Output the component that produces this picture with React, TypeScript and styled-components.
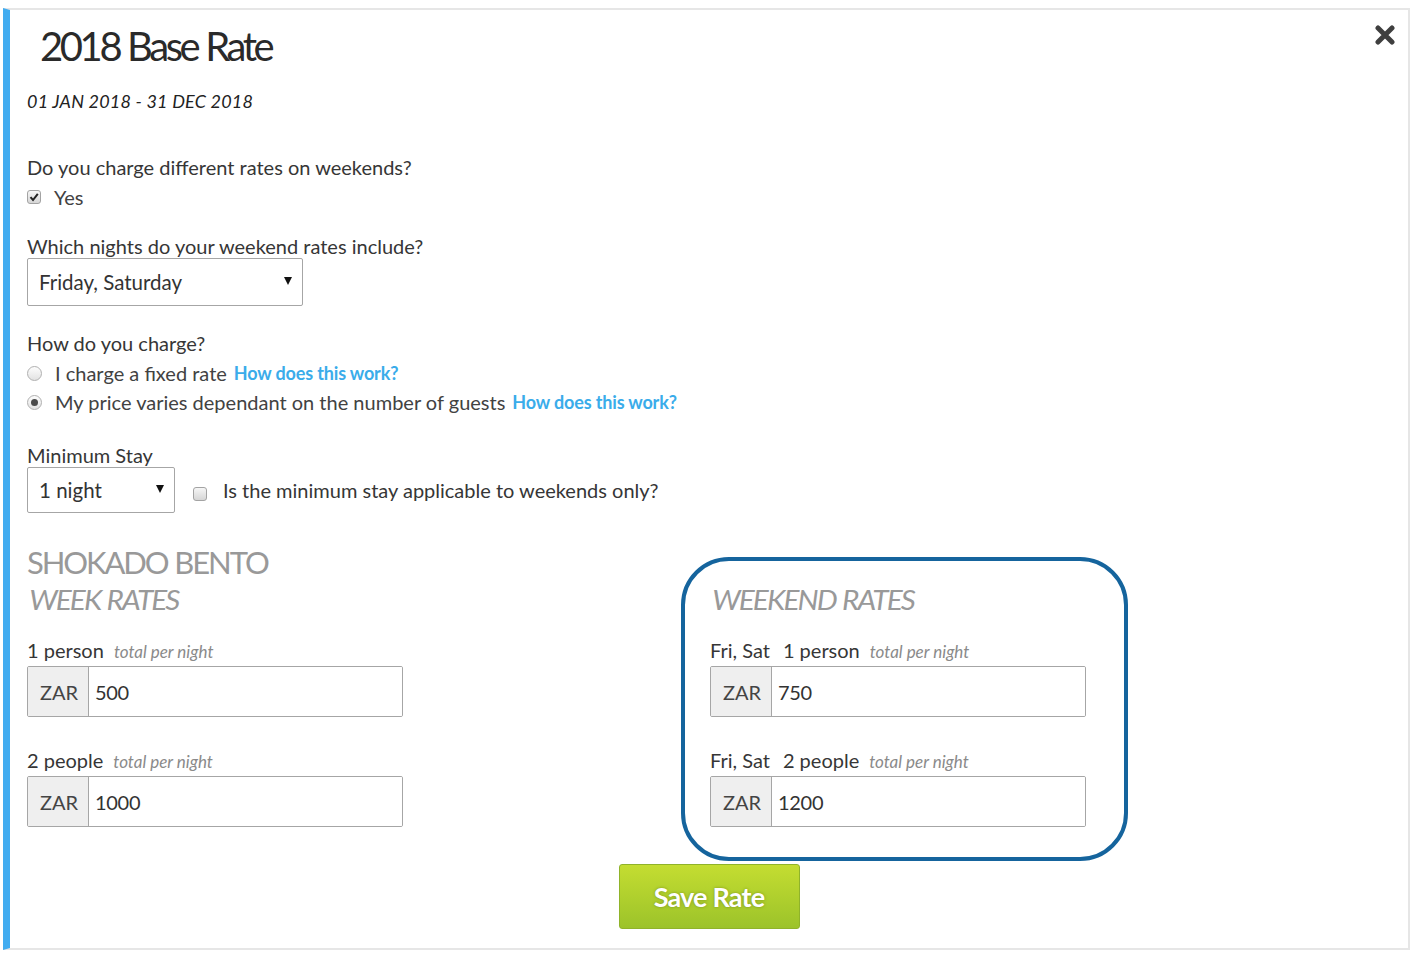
import React from 'react'
import styled, { createGlobalStyle } from 'styled-components'

const GlobalStyle = createGlobalStyle`
  html, body {
    margin: 0;
    padding: 0;
    background: #ffffff;
  }

  body {
    font-family: Lato, "Open Sans", "Liberation Sans", sans-serif;
    color: #3b3b3b;
  }

  * {
    box-sizing: border-box;
  }
`

const StyledPanel = styled.div`
  position: relative;
  margin: 8px 0 0 3px;
  width: 1407px;
  height: 942px;
  border: 2px solid #e6e6e6;
  border-left: 7px solid #42acf0;
  padding: 12px 0 0 17px;
`

const StyledClose = styled.button`
  position: absolute;
  top: 15px;
  right: 13px;
  width: 20px;
  height: 20px;
  padding: 0;
  border: none;
  background: none;
  cursor: pointer;
`

const StyledTitle = styled.h1`
  margin: 0 0 0 13px;
  font-size: 40px;
  line-height: 48px;
  font-weight: 400;
  letter-spacing: -3.4px;
  word-spacing: 1px;
  color: #2a2a2a;
`

const StyledDates = styled.div`
  margin-top: 20px;
  font-size: 18px;
  line-height: 22px;
  font-style: italic;
  letter-spacing: 0.2px;
  color: #222;
`

const StyledLabel = styled.div<{ $mt: number }>`
  margin-top: ${p => p.$mt}px;
  font-size: 20px;
  line-height: 24px;
  color: #363636;
`

const StyledOptionRow = styled.div<{ $mt: number }>`
  display: flex;
  align-items: center;
  height: 26px;
  margin-top: ${p => p.$mt}px;
  font-size: 20px;
  color: #424242;
`

const StyledCheckbox = styled.span<{ $offset?: number; $ml?: number }>`
  display: inline-flex;
  align-items: center;
  justify-content: center;
  flex: none;
  width: 14px;
  height: 14px;
  margin-top: ${p => p.$offset ?? 0}px;
  margin-left: ${p => p.$ml ?? 0}px;
  border: 1px solid #a3a3a3;
  border-radius: 3px;
  background: linear-gradient(#f6f6f6, #d6d6d6);
`

const StyledRadio = styled.span<{ $checked?: boolean }>`
  display: inline-flex;
  align-items: center;
  justify-content: center;
  flex: none;
  width: 15px;
  height: 15px;
  border: 1px solid #b0b0b0;
  border-radius: 50%;
  background: linear-gradient(#fdfdfd, #e2e2e2);

  &::after {
    content: '';
    display: ${p => (p.$checked ? 'block' : 'none')};
    width: 7px;
    height: 7px;
    border-radius: 50%;
    background: #4a4a4a;
  }
`

const StyledOptionText = styled.span<{ $gap: number }>`
  margin-left: ${p => p.$gap}px;
`

const StyledLink = styled.a`
  margin-left: 7px;
  font-size: 18px;
  font-weight: 700;
  letter-spacing: -0.15px;
  color: #3aacea;
  text-decoration: none;
`

const StyledSelect = styled.div<{ $width: number; $height: number }>`
  position: relative;
  display: flex;
  align-items: center;
  width: ${p => p.$width}px;
  height: ${p => p.$height}px;
  padding-left: 11px;
  border: 1px solid #a6a6a6;
  border-radius: 2px;
  background: #fff;
  font-size: 20.5px;
  color: #333;

  &::after {
    content: '';
    position: absolute;
    right: 10px;
    top: 50%;
    margin-top: -5px;
    border-left: 4px solid transparent;
    border-right: 4px solid transparent;
    border-top: 8px solid #111;
  }
`

const StyledStayRow = styled.div`
  display: flex;
  align-items: center;
`

const StyledStayQuestion = styled.span`
  margin-left: 16px;
  font-size: 20px;
  color: #363636;
`

const StyledRates = styled.div`
  display: grid;
  grid-template-columns: 654px 447px;
  align-items: start;
  margin-top: 31px;
`

const StyledColumn = styled.div``

const StyledBrand = styled.div`
  font-size: 31px;
  line-height: 37px;
  letter-spacing: -2.1px;
  word-spacing: 1px;
  color: #999;
`

const StyledRatesHeading = styled.div<{ $mt: number }>`
  margin-top: ${p => p.$mt}px;
  padding-left: 2px;
  font-size: 27px;
  line-height: 32px;
  font-style: italic;
  letter-spacing: -1.7px;
  word-spacing: 1px;
  color: #999;
  transform: scaleX(1.1);
  transform-origin: left center;
`

const StyledWeekendBox = styled.div`
  margin-top: 13px;
  padding: 23px 36px 30px 25px;
  border: 4px solid #15649d;
  border-radius: 48px;
`

const StyledFieldLabel = styled.div<{ $mt: number }>`
  display: flex;
  align-items: baseline;
  margin-top: ${p => p.$mt}px;
  font-size: 20px;
  line-height: 24px;
  color: #363636;
`

const StyledDays = styled.span`
  margin-right: 13px;
`

const StyledHint = styled.span`
  margin-left: 10px;
  font-size: 17px;
  font-style: italic;
  color: #8a8a8a;
`

const StyledInputGroup = styled.div<{ $mt: number }>`
  display: flex;
  width: 376px;
  height: 51px;
  margin-top: ${p => p.$mt}px;
  border: 1px solid #a6a6a6;
  border-radius: 2px;
  overflow: hidden;
`

const StyledAddon = styled.span`
  display: flex;
  align-items: center;
  justify-content: center;
  flex: none;
  width: 61px;
  padding-left: 2px;
  border-right: 1px solid #a6a6a6;
  background: #efefef;
  font-size: 20px;
  color: #444;
`

const StyledInput = styled.input`
  flex: 1;
  min-width: 0;
  padding: 0 0 0 6px;
  border: none;
  outline: none;
  background: #fff;
  font-family: Lato, "Open Sans", "Liberation Sans", sans-serif;
  font-size: 20px;
  letter-spacing: -0.3px;
  color: #333;
`

const StyledFooter = styled.div`
  display: flex;
  justify-content: center;
  margin: 3px 0 0 -17px;
`

const StyledSaveButton = styled.button`
  width: 181px;
  height: 65px;
  border: 1px solid #90b32a;
  border-radius: 3px;
  background: linear-gradient(#c4dd31, #9cc32a);
  font-family: Lato, "Open Sans", "Liberation Sans", sans-serif;
  font-size: 27px;
  font-weight: 700;
  letter-spacing: -0.8px;
  color: #fff;
  text-shadow: 0 0 3px rgba(90, 110, 20, 0.6);
  cursor: pointer;
`

const CheckMark = () => (
  <svg width="10" height="10" viewBox="0 0 10 10">
    <path d="M1.5 5.2 L4 8 L8.8 1.8" fill="none" stroke="#222" strokeWidth="2" />
  </svg>
)

const CloseIcon = () => (
  <svg width="20" height="20" viewBox="0 0 20 20">
    <path d="M3 3 L17 17 M17 3 L3 17" stroke="#3f3f3f" strokeWidth="5" strokeLinecap="round" />
  </svg>
)

const RateField = ({ days, people, value, mt }: { days?: string; people: string; value: string; mt: number }) => (
  <>
    <StyledFieldLabel $mt={mt}>
      {days && <StyledDays>{days}</StyledDays>}
      <span>{people}</span>
      <StyledHint>total per night</StyledHint>
    </StyledFieldLabel>
    <StyledInputGroup $mt={2}>
      <StyledAddon>ZAR</StyledAddon>
      <StyledInput defaultValue={value} />
    </StyledInputGroup>
  </>
)

const App = () => {
  return (
    <>
      <GlobalStyle />
      <StyledPanel>
        <StyledClose aria-label="Close">
          <CloseIcon />
        </StyledClose>

        <StyledTitle>2018 Base Rate</StyledTitle>
        <StyledDates>01 JAN 2018 - 31 DEC 2018</StyledDates>

        <StyledLabel $mt={43}>Do you charge different rates on weekends?</StyledLabel>
        <StyledOptionRow $mt={5}>
          <StyledCheckbox>
            <CheckMark />
          </StyledCheckbox>
          <StyledOptionText $gap={13}>Yes</StyledOptionText>
        </StyledOptionRow>

        <StyledLabel $mt={24}>Which nights do your weekend rates include?</StyledLabel>
        <StyledSelect $width={276} $height={48}>Friday, Saturday</StyledSelect>

        <StyledLabel $mt={25}>How do you charge?</StyledLabel>
        <StyledOptionRow $mt={5}>
          <StyledRadio />
          <StyledOptionText $gap={13}>I charge a fixed rate</StyledOptionText>
          <StyledLink href="#">How does this work?</StyledLink>
        </StyledOptionRow>
        <StyledOptionRow $mt={3}>
          <StyledRadio $checked />
          <StyledOptionText $gap={13}>My price varies dependant on the number of guests</StyledOptionText>
          <StyledLink href="#">How does this work?</StyledLink>
        </StyledOptionRow>

        <StyledLabel $mt={28}>Minimum Stay</StyledLabel>
        <StyledStayRow>
          <StyledSelect $width={148} $height={46}>1 night</StyledSelect>
          <StyledCheckbox $offset={8} $ml={18} />
          <StyledStayQuestion>Is the minimum stay applicable to weekends only?</StyledStayQuestion>
        </StyledStayRow>

        <StyledRates>
          <StyledColumn>
            <StyledBrand>SHOKADO BENTO</StyledBrand>
            <StyledRatesHeading $mt={3}>WEEK RATES</StyledRatesHeading>
            <RateField people="1 person" value="500" mt={22} />
            <RateField people="2 people" value="1000" mt={31} />
          </StyledColumn>
          <StyledWeekendBox>
            <StyledRatesHeading $mt={0}>WEEKEND RATES</StyledRatesHeading>
            <RateField days="Fri, Sat" people="1 person" value="750" mt={22} />
            <RateField days="Fri, Sat" people="2 people" value="1200" mt={31} />
          </StyledWeekendBox>
        </StyledRates>

        <StyledFooter>
          <StyledSaveButton>Save Rate</StyledSaveButton>
        </StyledFooter>
      </StyledPanel>
    </>
  )
}

export default App
